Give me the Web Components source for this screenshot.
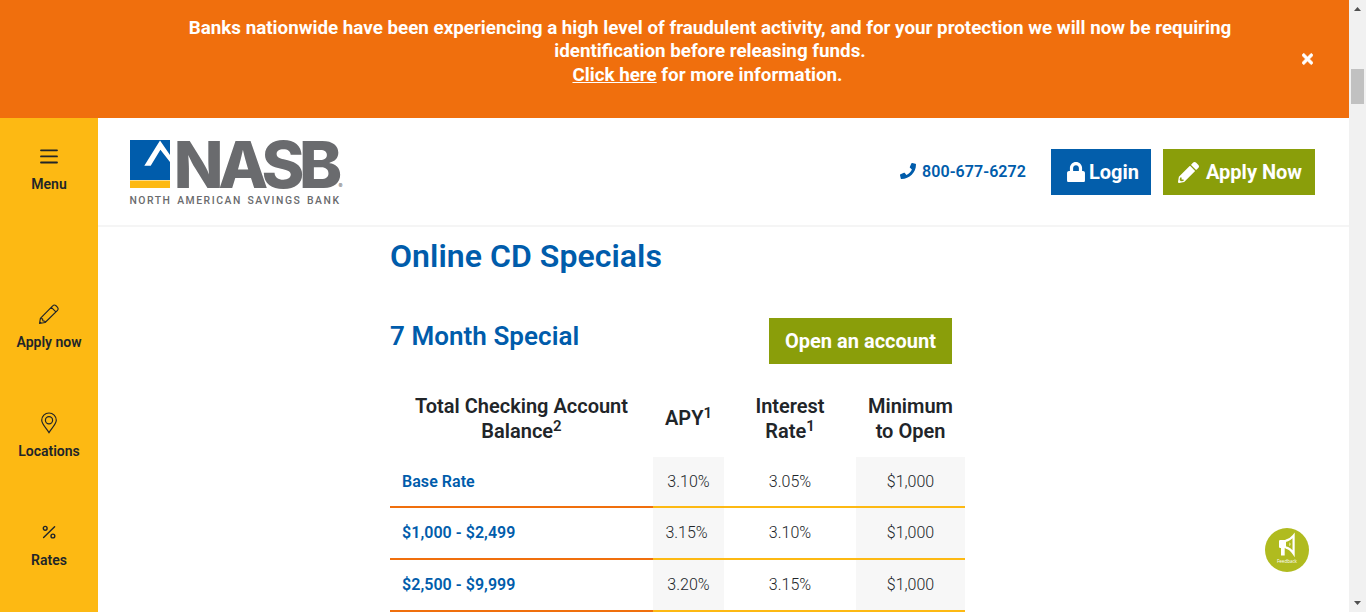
<!DOCTYPE html>
<html lang="en">
<head>
<meta charset="utf-8">
<title>Online CD Specials | NASB</title>
<style>
html,body{margin:0;height:612px;overflow:hidden;background:#fff}
body{font-family:Roboto,"Liberation Sans",sans-serif;color:#212529}
</style>
</head>
<body>
<bank-page></bank-page>
<script>
const define = (name, html) => customElements.define(name, class extends HTMLElement {
  constructor() {
    super();
    const t = document.createElement('template');
    t.innerHTML = html;
    this.attachShadow({mode: 'open'}).append(t.content.cloneNode(true));
  }
});

define('alert-banner', `
<style>
:host{display:flex;justify-content:center;height:118px;box-sizing:border-box;padding:17px 0 0 71px;background:#f06f0d;color:#fff;position:relative}
.msg{margin:0;text-align:center;font-weight:700;font-size:18.8px;line-height:23.4px;white-space:nowrap}
button{position:absolute;right:36px;top:51px;border:0;padding:0;background:none;width:11px;height:16px}
svg{display:block}
</style>
<p class="msg"><slot></slot></p>
<button aria-label="Close"><svg width="11" height="16" viewBox="0 0 352 512" fill="#fff" stroke="#fff" stroke-width="18"><path d="M242.72 256l100.07-100.07c12.28-12.28 12.28-32.19 0-44.48l-22.24-22.24c-12.28-12.28-32.19-12.28-44.48 0L176 189.28 75.93 89.21c-12.28-12.28-32.19-12.28-44.48 0L9.21 111.45c-12.28 12.28-12.28 32.19 0 44.48L109.28 256 9.21 356.07c-12.28 12.28-12.28 32.19 0 44.48l22.24 22.24c12.28 12.28 32.2 12.28 44.48 0L176 322.72l100.07 100.07c12.28 12.28 32.2 12.28 44.48 0l22.24-22.24c12.28-12.28 12.28-32.19 0-44.48L242.72 256z"/></svg></button>`);

define('side-item', `
<style>
:host{display:flex;flex-direction:column;align-items:center;flex:none;height:109px;font-weight:600;font-size:14px;line-height:20px;color:#212529}
.icon{height:22px;display:grid;place-items:center;margin-bottom:7px}
</style>
<div class="icon"><slot name="icon"></slot></div><span><slot></slot></span>`);

define('side-nav', `
<style>
:host{display:flex;flex-direction:column;width:98px;height:494px;padding-top:27px;box-sizing:border-box;background:#fdb913;flex:none;overflow:hidden}
side-item:first-of-type{height:158px}
svg{display:block;fill:none;stroke:#212529}
</style>
<side-item><svg slot="icon" width="22" height="22" stroke-width="1.8" stroke-linecap="round"><path d="M3 5.3h16M3 11.4h16M3 17.5h16"/></svg>Menu</side-item>
<side-item><svg slot="icon" width="22" height="22" stroke-width="1.15" stroke-linejoin="round"><path d="M1.5 20.5l.9-5.1L14.7 2.9q1.5-1.6 3-.4l1.9 1.8q1.3 1.6-.1 3L7.1 19.5zM2.4 15.4l2.1.3.4 2.2 2 .3.2 1.3M13.3 4.3l4.6 4.6M1.7 18.8l1.7 1.5"/></svg>Apply now</side-item>
<side-item><svg slot="icon" width="22" height="22" stroke-width="1.2"><path d="M11 20.6C8.6 16.8 3.7 11.9 3.7 8.3a7.3 7.3 0 0 1 14.6 0c0 3.6-4.9 8.5-7.3 12.3z"/><circle cx="11" cy="8.3" r="3.6"/></svg>Locations</side-item>
<side-item><svg slot="icon" width="22" height="22" stroke-width="1.4" stroke-linecap="round"><path d="M5.6 16.5L16.6 5.8"/><circle cx="7.2" cy="7.3" r="1.9"/><circle cx="14.9" cy="15" r="1.9"/></svg>Rates</side-item>`);

define('bank-logo', `
<style>:host{display:block}svg{display:block;overflow:visible}text{font-family:Inter,Roboto,sans-serif;fill:#6a6b6e}.tag{font-family:Roboto,sans-serif}</style>
<svg width="216" height="68" viewBox="0 0 216 68">
<path fill="#005cab" d="M0 2h40v40H0z"/><path fill="#fdb913" d="M0 42.6h40V50H0z"/>
<path fill="#fff" d="M14.3 27.8L30 2.6 40 17v7L30.4 11.8 20.7 27.8z"/>
<text x="43.8" y="49.8" font-size="65" font-weight="800" letter-spacing="-5.4">NASB</text>
<text x="208.5" y="49.5" font-size="6" font-weight="500">®</text>
<text class="tag" x="-.6" y="65.8" font-size="10.4" font-weight="500" textLength="209.6" word-spacing="1.5">NORTH AMERICAN SAVINGS BANK</text>
</svg>`);

define('action-button', `
<style>
:host{display:flex;align-items:center;justify-content:center;height:46px;box-sizing:border-box;background:var(--fill,#8a9e0a);color:#fff;font-size:20px;font-weight:700;line-height:24px;white-space:nowrap}
::slotted(svg){display:block;margin-right:var(--gap,0)}
</style><slot name="icon"></slot><slot></slot>`);

define('site-header', `
<style>
:host{display:flex;height:109px;box-sizing:border-box;border-bottom:2px solid #f5f5f5;padding:0 34px 0 32px;background:#fff}
bank-logo{margin-top:20px;margin-right:auto;width:216px}
.tel{display:flex;align-items:center;gap:6px;height:20px;margin:43px 25px 0 0;color:#005cab;font-size:16px;font-weight:600;letter-spacing:.07px;line-height:20px}
.tel span{padding-top:1px}
action-button{margin-top:31px}
.login{width:100px;margin-right:12px;--fill:#035eab;--gap:4px;padding-left:4px}
.apply{width:152px;--gap:7px;padding-left:2px}
svg{fill:currentColor}
</style>
<bank-logo></bank-logo>
<div class="tel"><svg width="16" height="16" viewBox="0 0 512 512"><path d="M493.4 24.6l-104-24c-11.3-2.6-22.9 3.3-27.5 13.9l-48 112c-4.2 9.8-1.4 21.3 6.9 28l60.6 49.6c-36 76.7-98.9 140.5-177.2 177.2l-49.6-60.6c-6.8-8.3-18.2-11.1-28-6.9l-112 48C3.9 366.5-2 378.1.6 389.4l24 104C27.1 504.2 36.7 512 48 512c256.1 0 464-207.5 464-464 0-11.2-7.7-20.9-18.6-23.4z"/></svg><span>800-677-6272</span></div>
<action-button class="login"><svg slot="icon" width="18" height="20.5" viewBox="0 0 448 512"><path d="M400 224h-24v-72C376 68.2 307.8 0 224 0S72 68.2 72 152v72H48c-26.5 0-48 21.5-48 48v192c0 26.5 21.5 48 48 48h352c26.5 0 48-21.5 48-48V272c0-26.5-21.5-48-48-48zm-104 0H152v-72c0-39.7 32.3-72 72-72s72 32.3 72 72v72z"/></svg>Login</action-button>
<action-button class="apply"><svg slot="icon" width="21" height="21" viewBox="0 0 512 512"><path d="M497.9 142.1l-46.1 46.1c-4.7 4.7-12.3 4.7-17 0l-111-111c-4.7-4.7-4.7-12.3 0-17l46.1-46.1c18.7-18.7 49.1-18.7 67.9 0l60.1 60.1c18.8 18.7 18.8 49.1 0 67.9zM284.2 99.8L21.6 362.4.4 483.9c-2.9 16.4 11.4 30.6 27.8 27.8l121.5-21.3 262.6-262.6c4.7-4.7 4.7-12.3 0-17l-111-111c-4.8-4.7-12.4-4.7-17.1 0zM88 424h48v36.3l-64.5 11.3-31.1-31.1L51.7 376H88v48z"/></svg>Apply Now</action-button>`);

define('rate-table', `
<style>
:host{display:block}
table{border-collapse:separate;border-spacing:0;table-layout:fixed;width:575px}
th,td{padding:0;text-align:center;box-sizing:border-box}
thead th{height:76px;font-size:20px;font-weight:600;line-height:25px}
thead th:nth-child(2){padding-bottom:1px}
sup{font-size:75%;line-height:0;position:relative;top:-.5em;vertical-align:baseline}
tbody th,tbody td{height:52px;border-bottom:2px solid #fdb913;font-size:16px;line-height:24px}
tbody tr:first-child>*{height:51px}
tbody th{text-align:left;padding-left:12px;font-weight:600;color:#005cab;border-color:#f06f0d;letter-spacing:.05px}
tbody td{font-weight:350}
tbody td:nth-child(even){background:#f7f7f7}
</style>
<table><colgroup><col style="width:263px"><col style="width:71px"><col style="width:132px"><col style="width:109px"></colgroup>
<thead><tr><th>Total Checking Account<br>Balance<sup>2</sup></th><th>APY<sup>1</sup></th><th>Interest<br>Rate<sup>1</sup></th><th>Minimum<br>to Open</th></tr></thead>
<tbody><tr><th>Base Rate</th><td>3.10%</td><td>3.05%</td><td>$1,000</td></tr>
<tr><th>$1,000 - $2,499</th><td>3.15%&nbsp;</td><td>3.10%</td><td>$1,000</td></tr>
<tr><th>$2,500 - $9,999</th><td>3.20%</td><td>3.15%</td><td>$1,000</td></tr></tbody></table>`);

define('cd-specials', `
<style>
:host{display:block;padding:9px 0 0 292px}
h1,h2{margin:0;font-weight:600;color:#005cab;white-space:nowrap}
h1{font-size:32px;line-height:40px;letter-spacing:.05px}
.row{display:flex;width:562px;margin-top:42px;justify-content:space-between;height:63px}
h2{font-size:26px;line-height:36px;letter-spacing:.05px}
action-button{width:183px}
</style>
<h1>Online CD Specials</h1>
<div class="row"><h2>7 Month Special</h2><action-button>Open an account</action-button></div>
<rate-table></rate-table>`);

define('page-scrollbar', `
<style>
:host{display:flex;flex-direction:column;align-items:center;width:17px;height:612px;background:#f1f1f1;flex:none}
.thumb{width:13px;height:35px;background:#c1c1c1;margin:52px 0 auto}
svg{display:block;fill:#505050}
</style>
<svg width="17" height="17"><path d="M5 11l3.5-4 3.5 4z"/></svg><div class="thumb"></div><svg width="17" height="17"><path d="M5 6l3.5 4L12 6z"/></svg>`);

define('feedback-badge', `
<style>
:host{position:absolute;left:1265px;top:528px;width:44px;height:44px;border-radius:50%;background:#b0bb1f}
svg{display:block}
</style>
<svg width="44" height="44" viewBox="0 0 44 44"><path fill="#fff" d="M14 13.2q0-1.2 1.2-1.2H21v8h-1.3v7.5H16V20h-.8q-1.2 0-1.2-1.2z"/><path fill="none" stroke="#fff" stroke-width="2.2" d="M20.5 12.8Q25 12 28.6 7.6v18Q25 20.2 20.5 19.4"/><path fill="#fff" d="M24.6 14.2q1.8 2-.2 4z"/><text x="12" y="35" font-family="Open Sans,sans-serif" font-size="5.6" font-weight="500" fill="#fff" textLength="20" lengthAdjust="spacingAndGlyphs">Feedback</text></svg>`);

define('bank-page', `
<style>
:host{display:flex;width:1366px;height:612px;overflow:hidden;position:relative}
.view{width:1349px;flex:none}
.body{display:flex}
main{width:1251px;height:494px;overflow:hidden}
a{color:inherit;text-decoration:underline}
.more{margin-right:5px}
</style>
<div class="view">
<alert-banner>Banks nationwide have been experiencing a high level of fraudulent activity, and for your protection we will now be requiring<br>identification before releasing funds.<br><a href="#info">Click here</a><span class="more"> for more information.</span></alert-banner>
<div class="body"><side-nav></side-nav><main><site-header></site-header><cd-specials></cd-specials></main></div>
</div>
<page-scrollbar></page-scrollbar>
<feedback-badge></feedback-badge>`);
</script>
</body>
</html>
